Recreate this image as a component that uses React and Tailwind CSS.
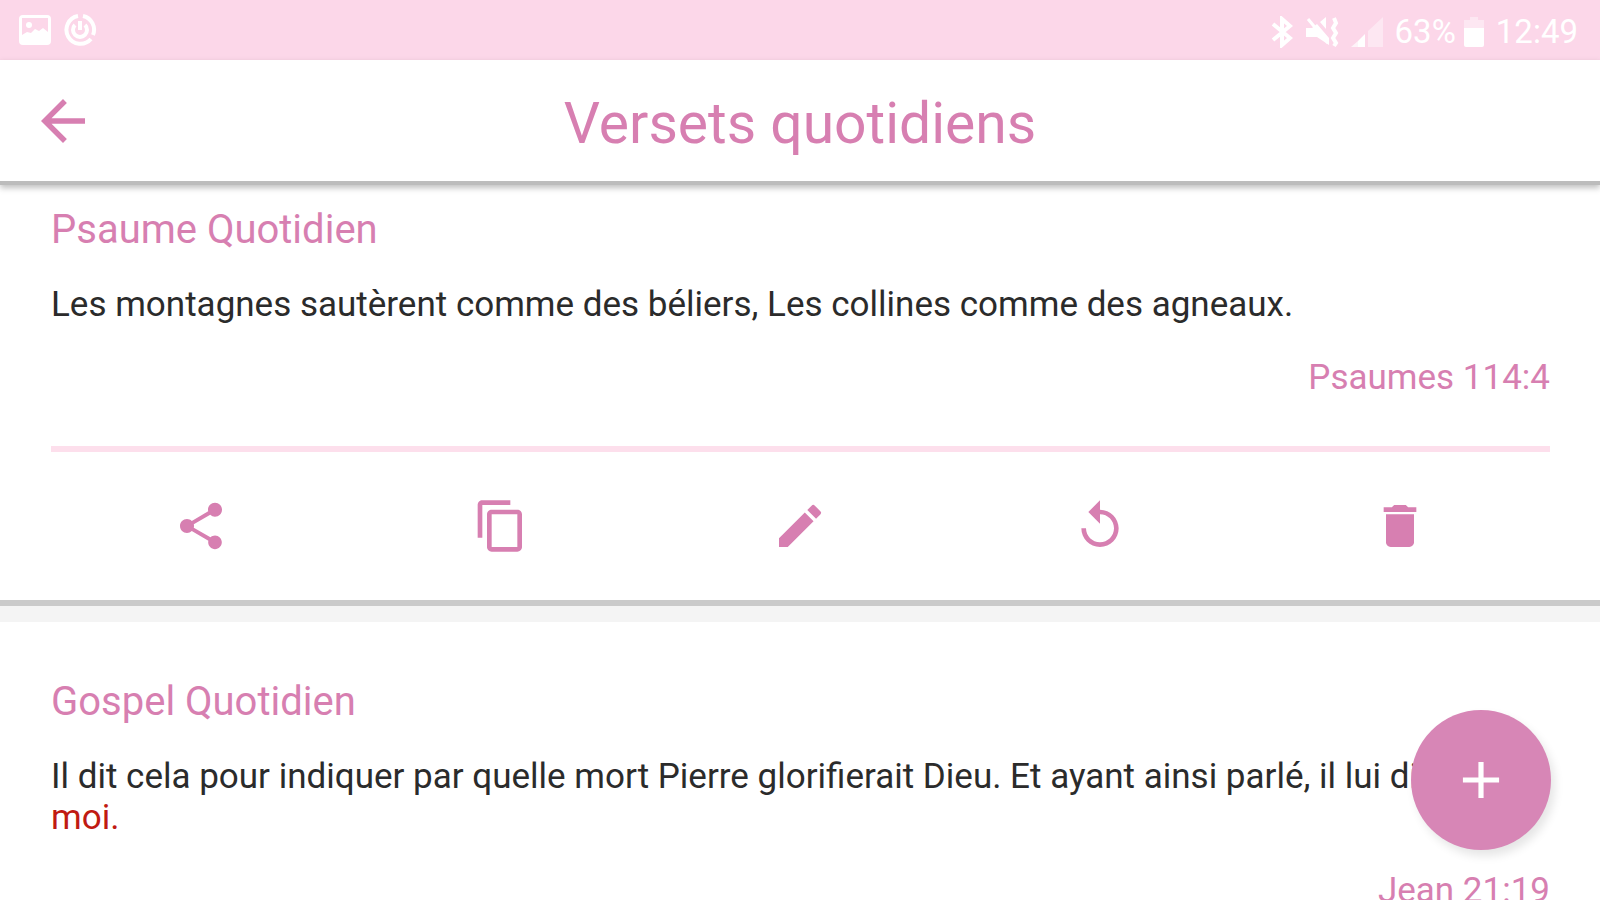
import React, { useState } from 'react';
import { MdAdd, MdArrowBack, MdContentCopy, MdDelete, MdEdit, MdReplay, MdShare } from 'react-icons/md';

const actions = [
  { label: 'Partager', Icon: MdShare },
  { label: 'Copier', Icon: MdContentCopy },
  { label: 'Modifier', Icon: MdEdit },
  { label: 'Actualiser', Icon: MdReplay },
  { label: 'Supprimer', Icon: MdDelete },
];

const initialVerses = [
  {
    id: 1,
    title: 'Psaume Quotidien',
    text: 'Les montagnes sautèrent comme des béliers, Les collines comme des agneaux.',
    reference: 'Psaumes 114:4',
  },
  {
    id: 2,
    title: 'Gospel Quotidien',
    text: 'Il dit cela pour indiquer par quelle mort Pierre glorifierait Dieu. Et ayant ainsi parlé, il lui dit: ',
    quote: 'Suis-moi.',
    reference: 'Jean 21:19',
  },
];

function StatusBar() {
  return (
    <div className="flex h-[60px] shrink-0 items-center justify-between bg-[#fcd7e9] pt-1 pr-[22px] pl-[19px] text-white">
      <div className="flex items-center gap-3 pb-1">
        {/* Picture */}
        <svg viewBox="0 0 32 30" className="h-[30px] w-8" fill="currentColor">
          <path
            fillRule="evenodd"
            d="M4 0h24a4 4 0 0 1 4 4v22a4 4 0 0 1-4 4H4a4 4 0 0 1-4-4V4a4 4 0 0 1 4-4zM3 3v17l5-3 4 1 4-4 4 2 4-3 5 4V3z"
          />
          <circle cx="10" cy="10" r="3" />
        </svg>
        {/* Timer */}
        <svg viewBox="0 0 34 34" className="size-[34px]" fill="none" stroke="currentColor">
          <path strokeWidth="4" d="M15 3A14 14 0 1 0 28 26M30 22A14 14 0 0 0 20 3" />
          <path strokeWidth="4" d="M12 12a7 7 0 1 0 10 0" />
          <path strokeWidth="4" d="M17 8v9" />
        </svg>
      </div>

      <div className="flex items-center">
        {/* Bluetooth */}
        <svg viewBox="0 0 22 32" className="mr-3 h-8 w-[22px]" fill="none" stroke="currentColor" strokeWidth="4">
          <path d="M2 8l17 14-8 7V3l8 7L2 24" />
        </svg>
        {/* Muted with vibration */}
        <svg viewBox="0 0 34 32" className="mr-3 h-8 w-[34px]" fill="none">
          <path fill="currentColor" d="M1 12h6l5-4 12 14v7L12 21H1zM15 6l6-5v12z" />
          <path stroke="currentColor" strokeWidth="3" d="M3 3l20 24" />
          <path stroke="currentColor" strokeWidth="4" d="M29 2l2 5-3 5 3 5-3 5 3 5-2 3" />
        </svg>
        {/* Signal */}
        <svg viewBox="0 0 32 30" className="mr-3 h-[30px] w-8" fill="currentColor">
          <path opacity="0.400" d="M32 0v30H17V14z" />
          <path opacity="0.700" d="M7 24v6H0z" />
          <path d="M14 17v13H7v-6z" />
        </svg>
        <span className="text-[33px] leading-9">63%</span>
        {/* Battery */}
        <svg viewBox="0 0 20 30" className="mx-2 h-[30px] w-5" fill="currentColor">
          <path opacity="0.400" d="M6 0h8v3h6v8H0V3h6z" />
          <path d="M0 11h20v17a2 2 0 0 1-2 2H2a2 2 0 0 1-2-2z" />
        </svg>
        <span className="ml-1 text-[33px] leading-9">12:49</span>
      </div>
    </div>
  );
}

function VerseCard({ verse, onDelete }) {
  const handleAction = (label) => {
    if (label === 'Supprimer') {
      onDelete(verse.id);
    }
  };

  return (
    <article className="border-b-[6px] border-[#cacaca] bg-white pr-[50px] pl-[51px]">
      <h2 className="text-[40px] leading-12 text-[#d77fb1]">{verse.title}</h2>
      <p className="mt-[30px] text-[35px] leading-[41px] text-[#2b2b2b]">
        {verse.text}
        {verse.quote && <span className="text-[#c01a12]">{verse.quote}</span>}
      </p>
      <p className="mt-8 text-right text-[35px] leading-[41px] text-[#d77fb1]">{verse.reference}</p>

      <div className="mt-12 grid grid-cols-5 border-t-[6px] border-[#fddfec] py-[46px]">
        {actions.map(({ label, Icon }) => (
          <button
            key={label}
            type="button"
            aria-label={label}
            onClick={() => handleAction(label)}
            className="flex cursor-pointer justify-center text-[#d77fb1]"
          >
            <Icon className="size-14" />
          </button>
        ))}
      </div>
    </article>
  );
}

function App() {
  const [verses, setVerses] = useState(initialVerses);

  const deleteVerse = (id) => {
    setVerses(verses.filter((verse) => verse.id !== id));
  };

  return (
    <div className="relative flex h-screen flex-col overflow-hidden bg-white font-[Roboto,sans-serif]">
      <StatusBar />

      <header className="z-10 grid h-[125px] shrink-0 grid-cols-[66px_1fr_66px] items-center border-b-4 border-[#bcbcbc] bg-white px-[30px] shadow-[0_3px_6px_rgba(0,0,0,0.25)]">
        <button type="button" aria-label="Retour" className="cursor-pointer text-[#d77fb1]">
          <MdArrowBack className="size-[66px]" />
        </button>
        <h1 className="pt-1.5 text-center text-[57px] leading-16 text-[#d77fb1]">Versets quotidiens</h1>
      </header>

      <main className="flex-1 overflow-hidden bg-white pt-[21px]">
        {verses.map((verse, index) => (
          <React.Fragment key={verse.id}>
            {index > 0 && <div className="mb-14 h-4 bg-[#f4f4f4]" />}
            <VerseCard verse={verse} onDelete={deleteVerse} />
          </React.Fragment>
        ))}
      </main>

      {/* Floating add button */}
      <button
        type="button"
        aria-label="Ajouter"
        className="absolute right-[49px] bottom-[50px] z-20 flex size-[140px] cursor-pointer items-center justify-center rounded-full bg-[#d786b6] text-white shadow-[4px_6px_10px_rgba(0,0,0,0.1)]"
      >
        <MdAdd className="size-[62px]" />
      </button>
    </div>
  );
}

export default App;
